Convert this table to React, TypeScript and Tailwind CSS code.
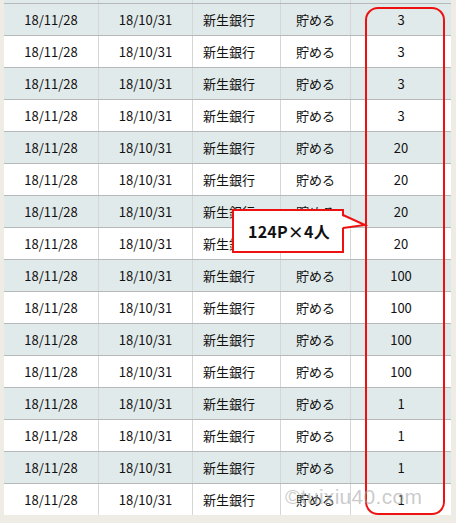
const rows = [
  '3', '3', '3', '3',
  '20', '20', '20', '20',
  '100', '100', '100', '100',
  '1', '1', '1', '1',
]

function Row({ value, shaded }: { value: string; shaded: boolean }) {
  return (
    <div
      className={`grid grid-cols-[95px_94px_88px_70px_100px] h-[32px] border-t border-[#b5b9b9] text-[13px] text-[#111] ${
        shaded ? 'bg-[#e1eaea]' : 'bg-white'
      }`}
    >
      <div className="flex items-center justify-center border-r border-[#d6d6d6]">18/11/28</div>
      <div className="flex items-center justify-center border-r border-[#d6d6d6]">18/10/31</div>
      <div className="flex items-center pl-[10px] border-r border-[#d6d6d6]">新生銀行</div>
      <div className="flex items-center justify-center border-r border-[#d6d6d6]">貯める</div>
      <div className="flex items-center justify-center">{value}</div>
    </div>
  )
}

export default function App() {
  return (
    <div
      className="relative w-[456px] h-[523px] overflow-hidden bg-[#efebe5]"
      style={{ fontFamily: '"Noto Sans CJK JP", "Noto Sans", sans-serif' }}
    >
      <div className="ml-[4px] w-[447px]">
        <div className="grid grid-cols-[95px_94px_88px_70px_100px] h-[3px] bg-[#e1eaea]">
          <div className="border-r border-[#d6d6d6]" />
          <div className="border-r border-[#d6d6d6]" />
          <div className="border-r border-[#d6d6d6]" />
          <div className="border-r border-[#d6d6d6]" />
          <div />
        </div>
        {rows.map((v, i) => (
          <Row key={i} value={v} shaded={i % 2 === 0} />
        ))}
      </div>

      {/* red highlight around the points column */}
      <div className="absolute left-[365px] top-[7px] w-[80px] h-[508px] rounded-[13px] border-2 border-[#ee1111]" />

      {/* callout */}
      <div className="absolute left-[232px] top-[209px] w-[112px] h-[44px] bg-white border-2 border-[#ee1111] flex items-center pl-[14px]">
        <span className="text-[16px] font-bold text-[#111] tracking-[0.2px]">124P×4人</span>
      </div>
      <svg className="absolute left-[340px] top-[213px]" width="28" height="20" viewBox="0 0 28 20">
        <polygon points="0,2 25,12 0,15" fill="white" />
        <polyline points="3,2 25,12 3,15" fill="none" stroke="#ee1111" strokeWidth="2" />
      </svg>

      {/* watermark */}
      <div
        className="absolute left-[285px] top-[486px] text-[21px] text-[#a8a8a8]/60 leading-none tracking-[0.3px]"
        style={{ fontFamily: '"Liberation Sans", Arial, sans-serif' }}
      >
        ©tuixiu40.com
      </div>
    </div>
  )
}
